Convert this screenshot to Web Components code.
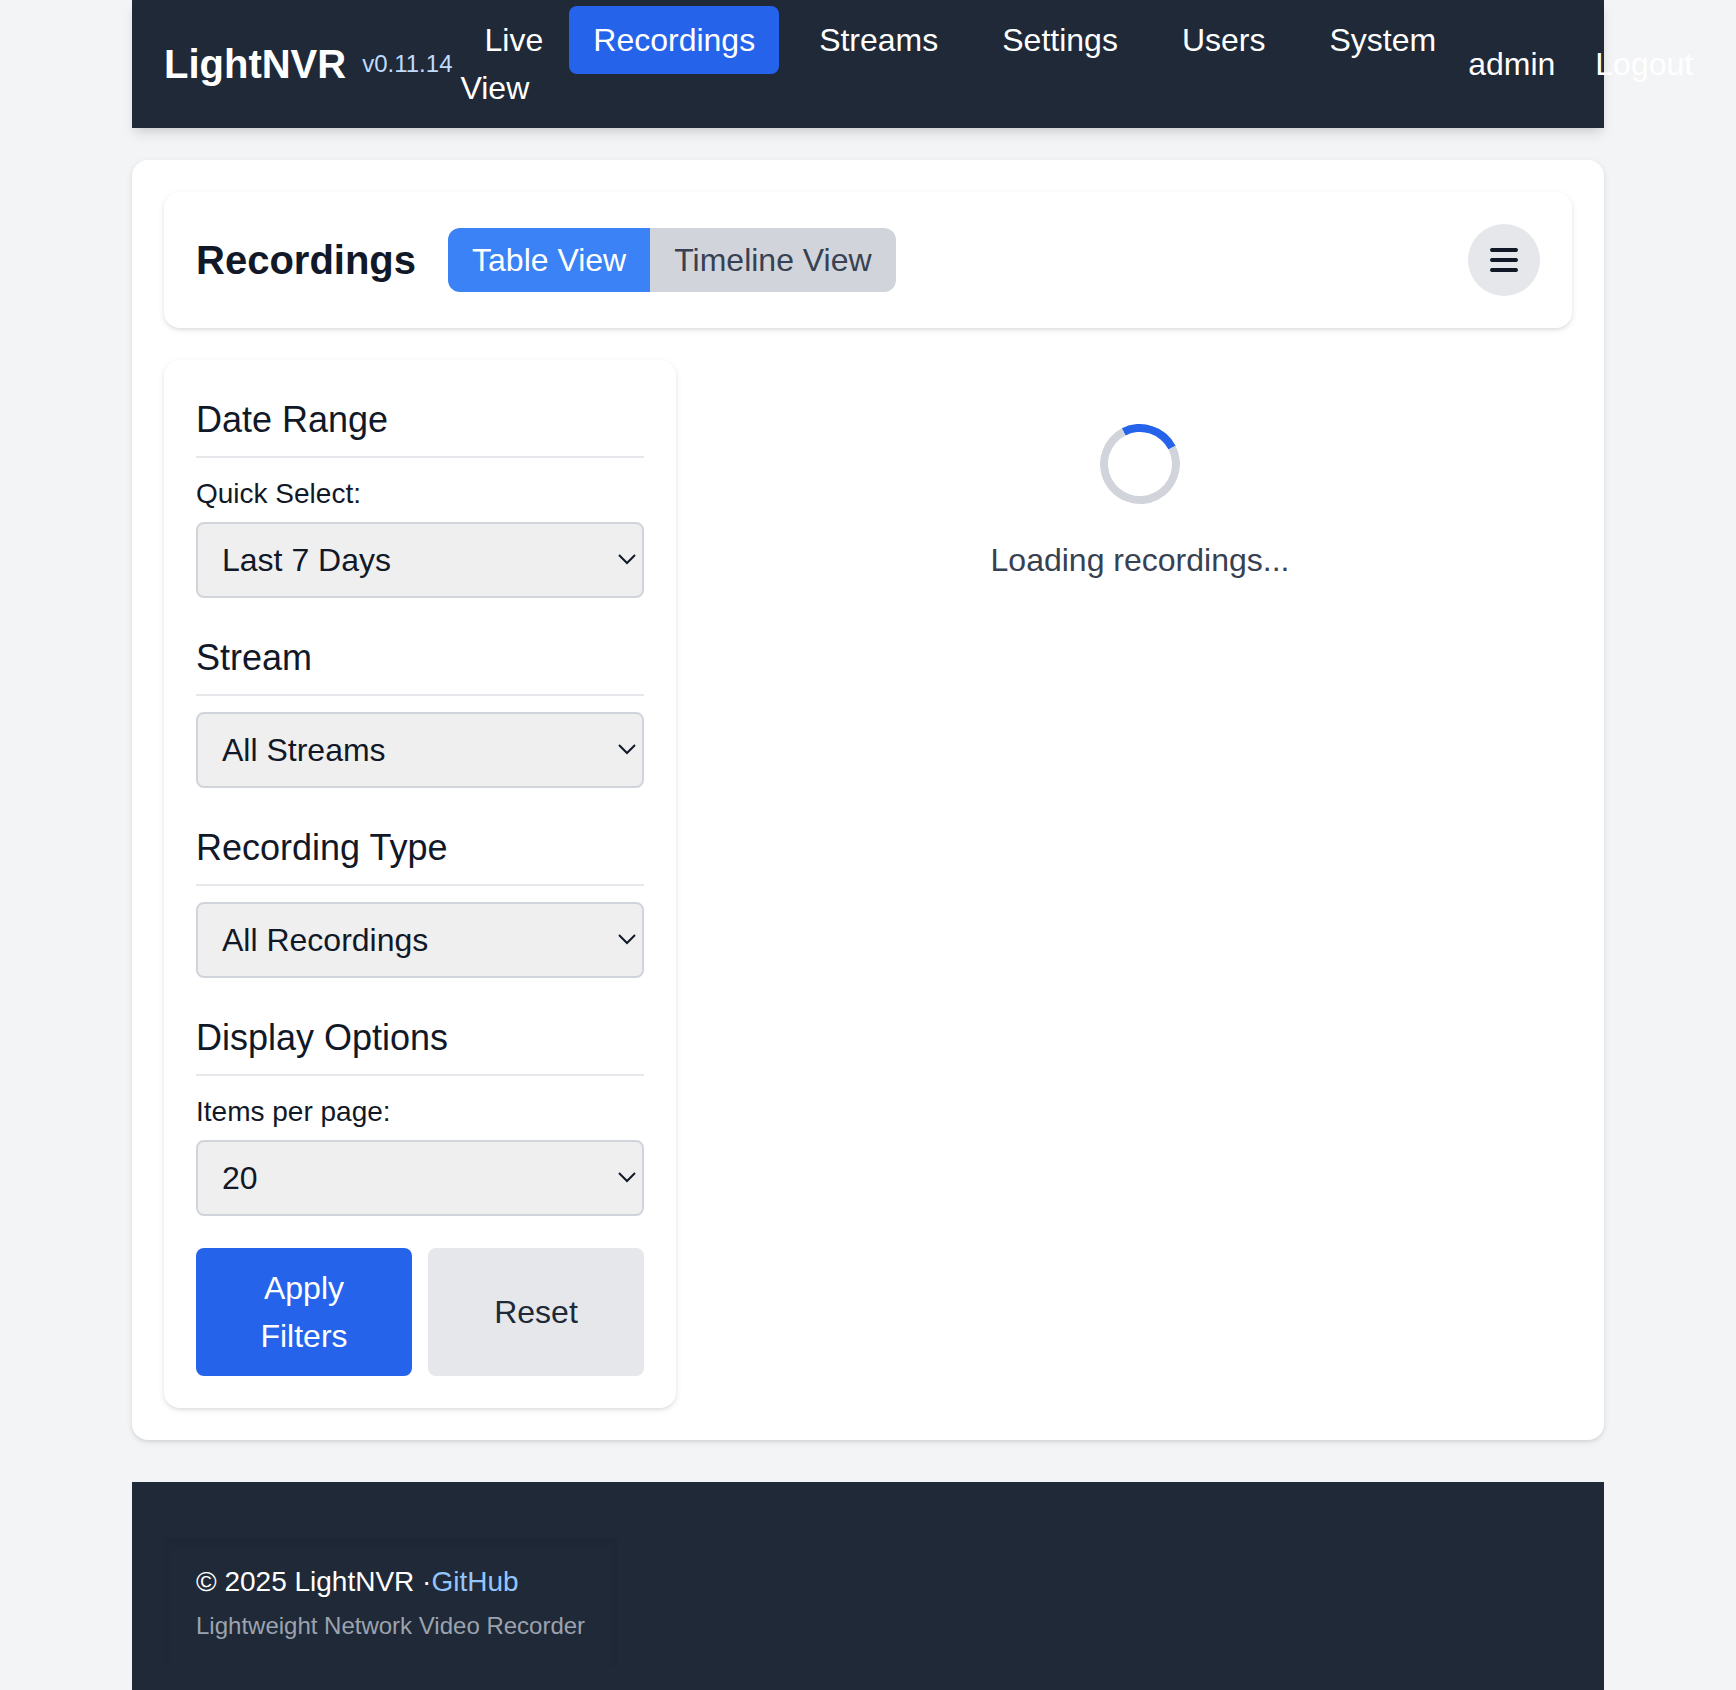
<!DOCTYPE html>
<html lang="en">
<head>
<meta charset="utf-8">
<title>LightNVR - Recordings</title>
<style>
  html { background: #f3f4f6; }
  body { margin: 0; font: 32px/48px "Liberation Sans", Arial, sans-serif; color: #111827; }
</style>
</head>
<body>
<nvr-app></nvr-app>
<script>
const base = `<style>
  :host, *, *::before, *::after { box-sizing: border-box; }
  h1, h2, h3, p, ul { margin: 0; padding: 0; font: inherit; }
  a { color: inherit; text-decoration: none; }
  button { border: 0; font: inherit; cursor: pointer; }
</style>`;

function define(name, render) {
  customElements.define(name, class extends HTMLElement {
    constructor() {
      super();
      this.attachShadow({ mode: "open" });
    }
    connectedCallback() {
      this.shadowRoot.innerHTML = base + render(this);
    }
  });
}

define("nvr-nav-link", el => `<style>
  :host { display: block; }
  a { padding: 16px 24px; border-radius: 8px; color: #fff; }
  :host([active]) a { background: #2563eb; }
</style><a href="#"${el.hasAttribute("active") ? ' aria-current="page"' : ""}><slot></slot></a>`);

define("nvr-header", () => `<style>
  :host { display: block; background: #1f2937; color: #fff;
    box-shadow: 0 8px 12px -2px rgba(0,0,0,.1), 0 4px 8px -4px rgba(0,0,0,.1); }
  header { display: flex; justify-content: space-between; align-items: center; gap: 8px; padding: 16px 32px; }
  .brand { display: flex; align-items: center; gap: 16px; flex: none; }
  h1 { font-size: 40px; font-weight: 700; line-height: 56px; }
  .version { font-size: 24px; line-height: 32px; color: #bfdbfe; }
  nav { display: flex; align-items: flex-start; gap: 16px; }
  .user { display: flex; align-items: center; gap: 16px; }
</style>
<header>
  <div class="brand"><h1>LightNVR</h1><span class="version">v0.11.14</span></div>
  <nav aria-label="Main">
    <nvr-nav-link>Live View</nvr-nav-link>
    <nvr-nav-link active>Recordings</nvr-nav-link>
    <nvr-nav-link>Streams</nvr-nav-link>
    <nvr-nav-link>Settings</nvr-nav-link>
    <nvr-nav-link>Users</nvr-nav-link>
    <nvr-nav-link>System</nvr-nav-link>
  </nav>
  <div class="user"><span>admin</span><nvr-nav-link>Logout</nvr-nav-link></div>
</header>`);

define("nvr-card", () => `<style>
  :host { display: block; padding: 32px; border-radius: 16px; background: #fff;
    box-shadow: 0 2px 6px rgba(0,0,0,.1), 0 2px 4px -2px rgba(0,0,0,.1); }
</style><slot></slot>`);

define("nvr-toolbar", () => `<style>
  :host { display: flex; align-items: center; justify-content: space-between; }
  .left { display: flex; align-items: center; gap: 32px; }
  h2 { font-size: 40px; font-weight: 700; line-height: 56px; }
  .toggle { display: flex; }
  .toggle button { padding: 8px 24px; background: #d1d5db; color: #374151; }
  .toggle button:first-child { border-radius: 12px 0 0 12px; }
  .toggle button:last-child { border-radius: 0 12px 12px 0; }
  .toggle button[aria-pressed="true"] { background: #3b82f6; color: #fff; }
  .menu { display: flex; padding: 16px; border-radius: 50%; background: #e5e7eb; color: #111827; }
  svg { width: 40px; height: 40px; }
</style>
<div class="left">
  <h2>Recordings</h2>
  <div class="toggle">
    <button type="button" aria-pressed="true">Table View</button><button type="button" aria-pressed="false">Timeline View</button>
  </div>
</div>
<button type="button" class="menu" aria-label="Toggle filters">
  <svg viewBox="0 0 20 20" fill="none" stroke="currentColor" stroke-width="2" stroke-linecap="round"><path d="M4 5h12M4 10h12M4 15h12"/></svg>
</button>`);

define("nvr-filter", el => {
  const title = el.getAttribute("heading");
  const label = el.getAttribute("label");
  const options = el.getAttribute("options").split("|");
  return `<style>
  :host { display: block; }
  h3 { font-size: 36px; line-height: 56px; padding-bottom: 8px; border-bottom: 2px solid #e5e7eb; margin-bottom: 16px; }
  .caption { display: block; font-size: 28px; line-height: 40px; margin-bottom: 8px; }
  .field { display: grid; align-items: center; }
  .field > * { grid-area: 1 / 1; }
  select { appearance: none; width: 100%; margin: 0; padding: 12px 24px; border: 2px solid #d1d5db; border-radius: 8px;
    background: #efefef; color: #111827; font: inherit; }
  svg { justify-self: end; width: 20px; height: 12px; margin-right: 7px; pointer-events: none; }
</style>
<h3>${label ? title : `<label for="choice">${title}</label>`}</h3>
${label ? `<label class="caption" for="choice">${label}</label>` : ""}
<div class="field">
  <select id="choice">${options.map(o => `<option>${o}</option>`).join("")}</select>
  <svg viewBox="0 0 20 12" fill="none" stroke="#111827" stroke-width="2" aria-hidden="true"><path d="M2 1l8 8 8-8"/></svg>
</div>`;
});

define("nvr-sidebar", () => `<style>
  :host { display: flex; flex-direction: column; gap: 32px; }
  .actions { display: flex; gap: 16px; }
  .actions button { flex: 1 1 0; padding: 16px 32px; border-radius: 8px; background: #e5e7eb; color: #1f2937; }
  .actions .primary { background: #2563eb; color: #fff; }
</style>
<nvr-filter heading="Date Range" label="Quick Select:" options="Last 7 Days"></nvr-filter>
<nvr-filter heading="Stream" options="All Streams"></nvr-filter>
<nvr-filter heading="Recording Type" options="All Recordings"></nvr-filter>
<nvr-filter heading="Display Options" label="Items per page:" options="20"></nvr-filter>
<div class="actions">
  <button type="button" class="primary">Apply Filters</button>
  <button type="button">Reset</button>
</div>`);

define("nvr-loading", () => `<style>
  :host { display: flex; flex-direction: column; align-items: center; gap: 32px; padding: 64px 0; color: #374151; }
  .spinner { width: 80px; height: 80px; border: 8px solid #d1d5db; border-top-color: #2563eb; border-radius: 50%; transform: rotate(18deg); }
</style>
<div class="spinner"></div><p role="status"><slot></slot></p>`);

define("nvr-footer", () => `<style>
  :host { display: block; background: #1f2937; color: #fff; }
  footer { display: flex; padding: 56px 32px 24px; }
  .info { display: flex; flex-direction: column; gap: 8px; padding: 24px 32px; box-shadow: inset 0 4px 8px rgba(0,0,0,.05); }
  .copy { font-size: 28px; line-height: 40px; }
  .copy a { color: #93c5fd; }
  .tagline { font-size: 24px; line-height: 32px; color: #9ca3af; }
</style>
<footer><div class="info">
  <p class="copy">© 2025 LightNVR ·<a href="#">GitHub</a></p>
  <p class="tagline">Lightweight Network Video Recorder</p>
</div></footer>`);

define("nvr-app", () => `<style>
  :host { display: block; max-width: 1536px; margin: 0 auto; padding: 0 32px; }
  main { display: block; margin: 32px 0 42px; }
  .columns { display: flex; align-items: flex-start; gap: 32px; margin-top: 32px; }
  .side { flex: 0 0 512px; }
  nvr-loading { flex: 1; }
</style>
<nvr-header></nvr-header>
<main><nvr-card>
  <nvr-card><nvr-toolbar></nvr-toolbar></nvr-card>
  <div class="columns">
    <nvr-card class="side"><nvr-sidebar></nvr-sidebar></nvr-card>
    <nvr-loading>Loading recordings...</nvr-loading>
  </div>
</nvr-card></main>
<nvr-footer></nvr-footer>`);
</script>
</body>
</html>
